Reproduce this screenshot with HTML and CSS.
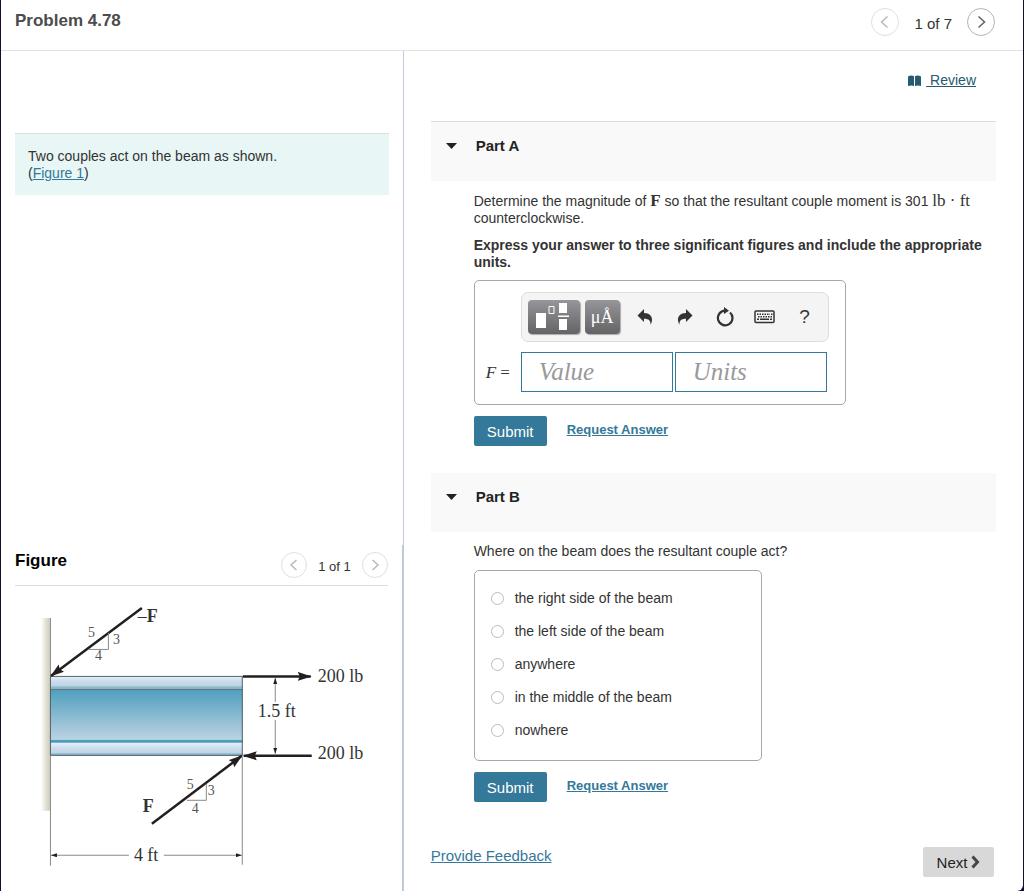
FILE: index.html
```html
<!DOCTYPE html>
<html lang="en">
<head>
  <meta charset="UTF-8">
  <meta name="viewport" content="width=device-width, initial-scale=1">
  <title>Problem 4.78</title>
  <link rel="stylesheet" href="styles.css">
</head>
<body>
  <div class="page">
    <header class="top-bar">
      <h1>Problem 4.78</h1>
      <nav class="pager" aria-label="Problem">
        <button type="button" class="round-btn" aria-label="Previous problem" disabled>
          <svg width="28" height="28" viewBox="0 0 28 28"><path d="M16.500 8.500L10.500 14l6 5.500"/></svg>
        </button>
        <span>1 of 7</span>
        <button type="button" class="round-btn" aria-label="Next problem">
          <svg width="28" height="28" viewBox="0 0 28 28"><path d="M11.500 8.500l6 5.500-6 5.500"/></svg>
        </button>
      </nav>
    </header>

    <div class="columns">
      <aside class="left">
        <div class="intro">
          Two couples act on the beam as shown.<br>
          (<a href="#figure">Figure 1</a>)
        </div>

        <section class="figure" id="figure">
          <div class="figure-head">
            <h2>Figure</h2>
            <nav class="pager pager-small" aria-label="Figure">
              <button type="button" class="round-btn" aria-label="Previous figure" disabled>
                <svg width="26" height="26" viewBox="0 0 26 26"><path d="M15.500 8L10 13l5.500 5"/></svg>
              </button>
              <span>1 of 1</span>
              <button type="button" class="round-btn" aria-label="Next figure" disabled>
                <svg width="26" height="26" viewBox="0 0 26 26"><path d="M10.500 8l5.500 5-5.500 5"/></svg>
              </button>
            </nav>
          </div>

          <svg class="beam" viewBox="15 586 373 305" role="img" aria-label="Beam with two couples">
            <defs>
              <linearGradient id="wall" x1="0" x2="1" y1="0" y2="0">
                <stop offset="0" stop-color="#fff"/>
                <stop offset="0.500" stop-color="#e4e3d8"/>
                <stop offset="1" stop-color="#cfcdbd"/>
              </linearGradient>
              <linearGradient id="web" x1="0" x2="0" y1="0" y2="1">
                <stop offset="0" stop-color="#509fbf"/>
                <stop offset="1" stop-color="#bcd3e1"/>
              </linearGradient>
              <linearGradient id="flange" x1="0" x2="0" y1="0" y2="1">
                <stop offset="0" stop-color="#e6f0fb"/>
                <stop offset="0.450" stop-color="#c9dbea"/>
                <stop offset="0.750" stop-color="#c0d5e4"/>
                <stop offset="0.850" stop-color="#8db9cf"/>
                <stop offset="1" stop-color="#8db9cf"/>
              </linearGradient>
              <marker id="big" viewBox="0 0 14 10" markerWidth="14" markerHeight="10" refX="13" refY="5" orient="auto" markerUnits="userSpaceOnUse">
                <path d="M0 .5L14 5 0 9.500 2 5z" fill="#231f20"/>
              </marker>
              <marker id="small" viewBox="0 0 6 4" markerWidth="6" markerHeight="4" refX="6" refY="2" orient="auto" markerUnits="userSpaceOnUse">
                <path d="M0 0l6 2-6 2z" fill="#231f20"/>
              </marker>
            </defs>

            <!-- wall -->
            <rect x="41" y="618" width="9" height="193" fill="url(#wall)"/>
            <path class="thin" d="M50.500 618v248"/>

            <!-- beam -->
            <rect x="50" y="676" width="193" height="13" fill="url(#flange)"/>
            <rect x="50" y="690" width="193" height="50" fill="url(#web)"/>
            <rect x="50" y="740" width="193" height="3" fill="#4a9cbc"/>
            <rect x="50" y="743" width="193" height="13" fill="url(#flange)"/>
            <path class="edge" d="M50.500 676.500h192v79h-192zM50 689.500h193"/>

            <!-- forces -->
            <path class="force" d="M142 608L51 676" marker-end="url(#big)"/>
            <path class="force" d="M152 824L242 756" marker-end="url(#big)"/>
            <path class="force" d="M243 676.500h68" marker-end="url(#big)"/>
            <path class="force" d="M312 756h-68" marker-end="url(#big)"/>

            <!-- slope triangles -->
            <path class="thin" d="M88 649.500h20.500V633M187 800.500h19.500V784"/>

            <!-- dimensions -->
            <path class="thin" d="M242.500 757v108"/>
            <path class="thin" d="M275.500 702v-24" marker-end="url(#small)"/>
            <path class="thin" d="M275.500 720v34" marker-end="url(#small)"/>
            <path class="thin" d="M129 855.500H51" marker-end="url(#small)"/>
            <path class="thin" d="M164 855.500h78" marker-end="url(#small)"/>

            <g class="small-text">
              <text x="88" y="637">5</text>
              <text x="113" y="644">3</text>
              <text x="95" y="660">4</text>
              <text x="187" y="789">5</text>
              <text x="208" y="795">3</text>
              <text x="192" y="813">4</text>
            </g>
            <text x="138" y="622">–<tspan class="bold">F</tspan></text>
            <text x="143" y="812" class="bold">F</text>
            <text x="318" y="682">200 lb</text>
            <text x="318" y="759">200 lb</text>
            <text x="258" y="717">1.5 ft</text>
            <text x="134" y="861">4 ft</text>
          </svg>
        </section>
      </aside>

      <main class="right">
        <div class="review">
          <svg width="13" height="12" viewBox="0 0 13 12"><path d="M0 1.500C2 .3 4.500.3 6 1.300V11C4.500 10.300 2 10.300 0 11zM7 1.300c1.500-1 4-1 6 .2V11c-2-.7-4.500-.7-6 0z" fill="#255a70"/></svg>
          <a href="#review">&nbsp;Review</a>
        </div>

        <section class="part">
          <h2 class="part-head part-head-first">
            <svg width="12" height="8" viewBox="0 0 12 8"><path d="M0 1h11L5.500 7z"/></svg>
            Part A
          </h2>
          <div class="part-body">
            <p>Determine the magnitude of <span class="math"><b>F</b></span> so that the resultant couple moment is 301 <span class="math">lb · ft</span> counterclockwise.</p>
            <p class="hint">Express your answer to three significant figures and include the appropriate units.</p>

            <form class="answer-box">
              <div class="toolbar">
                <button type="button" class="tool-dark tool-wide" aria-label="Templates">
                  <svg width="52" height="34" viewBox="0 0 52 34">
                    <path d="M8 13h10v15H8zM31 3h8v10h-8zM31 19h8v11h-8zM30 15.500h11v1.500H30z" fill="#fff"/>
                    <path d="M21 6.500h5v7h-5z" fill="none" stroke="#fff"/>
                  </svg>
                </button>
                <button type="button" class="tool-dark">μÅ</button>
                <button type="button" class="tool" aria-label="Undo">
                  <svg width="16" height="16" viewBox="0 0 16 16"><path d="M7 0v4c5.500 0 8.500 3.500 8 7.500-.2 1.500-.7 3-1.500 4.200.2-4-1.500-6-6.500-6V13L.5 6.500z"/></svg>
                </button>
                <button type="button" class="tool" aria-label="Redo">
                  <svg width="16" height="16" viewBox="0 0 16 16"><path d="M9 0v4c-5.500 0-8.500 3.500-8 7.500.2 1.500.7 3 1.500 4.200-.2-4 1.500-6 6.500-6V13l6.500-6.500z"/></svg>
                </button>
                <button type="button" class="tool" aria-label="Reset">
                  <svg width="18" height="20" viewBox="0 0 18 20"><path d="M14 5.500A7.300 7.300 0 1 1 9 3.700" fill="none" stroke="#333" stroke-width="2.200"/><path d="M8 0l5 3.800L8 7z"/></svg>
                </button>
                <button type="button" class="tool" aria-label="Keyboard">
                  <svg width="21" height="14" viewBox="0 0 21 14"><rect x="1" y="1" width="19" height="11.500" rx="1" fill="none" stroke="#333" stroke-width="1.500"/><path d="M3 4.300h13M17 4.300h1.500M4 6.800h14.500" fill="none" stroke="#333" stroke-width="1.600" stroke-dasharray="1.500 1"/><path d="M3 9.300h2M6 9.300h9M16 9.300h2" fill="none" stroke="#333" stroke-width="1.500"/></svg>
                </button>
                <button type="button" class="tool tool-help" aria-label="Help">?</button>
              </div>
              <label class="answer-label" for="value"><i>F</i> =</label>
              <div class="fields">
                <input type="text" id="value" placeholder="Value">
                <input type="text" id="units" placeholder="Units" aria-label="Units">
              </div>
            </form>

            <div class="actions">
              <button type="button" class="submit">Submit</button>
              <a href="#answer-a">Request Answer</a>
            </div>
          </div>
        </section>

        <section class="part">
          <h2 class="part-head">
            <svg width="12" height="8" viewBox="0 0 12 8"><path d="M0 1h11L5.500 7z"/></svg>
            Part B
          </h2>
          <div class="part-body">
            <p id="question-b">Where on the beam does the resultant couple act?</p>

            <div class="choices" role="radiogroup" aria-labelledby="question-b">
              <label><input type="radio" name="where"> the right side of the beam</label>
              <label><input type="radio" name="where"> the left side of the beam</label>
              <label><input type="radio" name="where"> anywhere</label>
              <label><input type="radio" name="where"> in the middle of the beam</label>
              <label><input type="radio" name="where"> nowhere</label>
            </div>

            <div class="actions">
              <button type="button" class="submit">Submit</button>
              <a href="#answer-b">Request Answer</a>
            </div>
          </div>
        </section>

        <footer class="bottom">
          <a href="#feedback">Provide Feedback</a>
          <button type="button" class="next">Next
            <svg width="9" height="14" viewBox="0 0 9 14"><path d="M1.500 1.500L6.500 7l-5 5.500" fill="none" stroke="#444" stroke-width="3"/></svg>
          </button>
        </footer>
      </main>
    </div>
  </div>
</body>
</html>
```
FILE: styles.css
```css
* {
  box-sizing: border-box;
}

body {
  margin: 0;
  background: #1b0a33;
  font-family: "Liberation Sans", Arial, sans-serif;
  font-size: 14px;
  line-height: 17px;
  color: #333;
}

h1, h2, p {
  margin: 0;
}

a {
  color: #34789a;
}

button {
  font-family: inherit;
  padding: 0;
  border: 0;
  cursor: pointer;
}

svg {
  display: block;
}

.page {
  display: flex;
  flex-direction: column;
  min-height: 100vh;
  margin: 0 1px;
  background: #fff;
  border-bottom-right-radius: 6px;
}

/* header */
.top-bar {
  display: flex;
  justify-content: space-between;
  align-items: flex-start;
  height: 51px;
  padding: 8px 28px 0 14px;
  border-bottom: 1px solid #e2e2e2;
}

.top-bar h1 {
  font-size: 17px;
  line-height: 25px;
  color: #4c4c4c;
}

.pager {
  display: flex;
  align-items: center;
  gap: 15px;
  font-size: 15px;
}

.pager span {
  padding-top: 3px;
}

.pager-small {
  gap: 11px;
  font-size: 13px;
}

.round-btn {
  border: 1px solid #b5b5b5;
  border-radius: 50%;
  background: #fff;
}

.round-btn svg {
  margin: -1px;
  fill: none;
  stroke: #666;
  stroke-width: 1.6;
}

.round-btn:disabled {
  border-color: #e0e0e0;
}

.round-btn:disabled svg {
  stroke: #bbb;
}

/* columns */
.columns {
  display: flex;
  flex: 1;
}

.left {
  display: flex;
  flex-direction: column;
  justify-content: space-between;
  width: 39.4%;
  padding-top: 82px;
  border-right: 1px solid #c5c9da;
}

.right {
  flex: 1;
  padding: 21px 27px 12px;
}

.intro {
  margin: 0 14px;
  padding: 14px 13px 13px;
  border-top: 1px solid #d8dfe0;
  background: #e8f6f6;
}

/* figure */
.figure {
  padding: 7px 14px 0;
  border-right: 1px solid #b9c9de;
}

.figure-head {
  display: flex;
  justify-content: space-between;
  align-items: flex-start;
  padding-bottom: 7px;
  border-bottom: 1px solid #ddd;
}

.figure-head h2 {
  font-size: 17px;
  color: #000;
}

.beam {
  width: 100%;
  font-family: "Liberation Serif", "Times New Roman", serif;
  font-size: 18px;
  fill: #333;
}

.small-text {
  font-size: 14px;
  fill: #555;
}

.bold {
  font-weight: bold;
}

.thin {
  fill: none;
  stroke: #8a8a8a;
}

.edge {
  fill: none;
  stroke: #55626a;
}

.force {
  fill: none;
  stroke: #231f20;
  stroke-width: 2.5;
}

/* parts */
.review {
  display: flex;
  justify-content: flex-end;
  align-items: center;
  gap: 5px;
  padding-right: 20px;
  margin-bottom: 32px;
}

.review a {
  color: #255a70;
}

.part-head {
  display: flex;
  gap: 18px;
  height: 59px;
  padding: 15px;
  background: #f9f9f9;
  font-size: 15px;
  color: #222;
}

.part-head svg {
  margin-top: 5px;
  fill: #222;
}

.part-head-first {
  height: 60px;
  border-top: 1px solid #ddd;
}

.part-body {
  padding: 11px 12px 27px 43px;
}

.math {
  font-family: "Liberation Serif", "Times New Roman", serif;
  font-size: 17px;
  line-height: 1;
}

.hint {
  margin-top: 10px;
  font-weight: bold;
}

/* answer box */
.answer-box {
  display: inline-grid;
  grid-template-columns: 35px auto;
  row-gap: 10px;
  align-items: center;
  margin-top: 9px;
  padding: 11px 16px 12px 11px;
  border: 1px solid #a8a8a8;
  border-radius: 5px;
}

.toolbar {
  grid-column: 2;
  display: flex;
  align-items: center;
  gap: 5px;
  height: 50px;
  padding: 0 8px 0 6px;
  border: 1px solid #ddd;
  border-radius: 7px;
  background: #f4f4f4;
}

.tool-dark {
  width: 35px;
  height: 34px;
  border-radius: 4px;
  background: linear-gradient(#96969b, #636365);
  box-shadow: 1px 1px 1px #aaa;
  color: #fff;
  font-family: "Liberation Serif", "Times New Roman", serif;
  font-size: 18px;
}

.tool-wide {
  width: 52px;
}

.tool {
  display: flex;
  justify-content: center;
  align-items: center;
  width: 40px;
  height: 34px;
  margin-right: -5px;
  background: none;
  fill: #333;
}

.tool-help {
  font-size: 19px;
  color: #333;
}

.answer-label {
  font-family: "Liberation Serif", "Times New Roman", serif;
  font-size: 17px;
}

.fields {
  display: flex;
  gap: 2px;
}

.fields input {
  width: 152px;
  height: 40px;
  padding: 0 17px;
  border: 1px solid #34789a;
  border-radius: 0;
  font-family: "Liberation Serif", "Times New Roman", serif;
  font-size: 25px;
}

.fields input::placeholder {
  color: #999;
  font-style: italic;
}

.actions {
  display: flex;
  align-items: flex-start;
  gap: 20px;
  margin-top: 11px;
}

.actions a {
  padding-top: 5px;
  font-size: 13px;
  font-weight: bold;
}

.submit {
  width: 73px;
  height: 30px;
  border-radius: 2px;
  background: #34789a;
  color: #fff;
  font-size: 15px;
}

/* choices */
.choices {
  display: inline-flex;
  flex-direction: column;
  gap: 16px;
  width: 288px;
  margin-top: 10px;
  padding: 19px 16px 21px;
  border: 1px solid #a8a8a8;
  border-radius: 5px;
}

.choices label {
  display: flex;
  align-items: center;
  gap: 11px;
}

.choices input {
  appearance: none;
  width: 13px;
  height: 13px;
  margin: 0;
  border: 1px solid #bbb;
  border-radius: 50%;
}

.choices input:checked {
  border: 4px solid #34789a;
}

/* footer */
.bottom {
  display: flex;
  justify-content: space-between;
  margin-top: 18px;
  padding-right: 2px;
  font-size: 15px;
}

.next {
  display: flex;
  justify-content: center;
  align-items: center;
  gap: 4px;
  width: 71px;
  height: 30px;
  border-radius: 2px;
  background: #d8d8d8;
  color: #222;
  font-size: 15px;
}
```
